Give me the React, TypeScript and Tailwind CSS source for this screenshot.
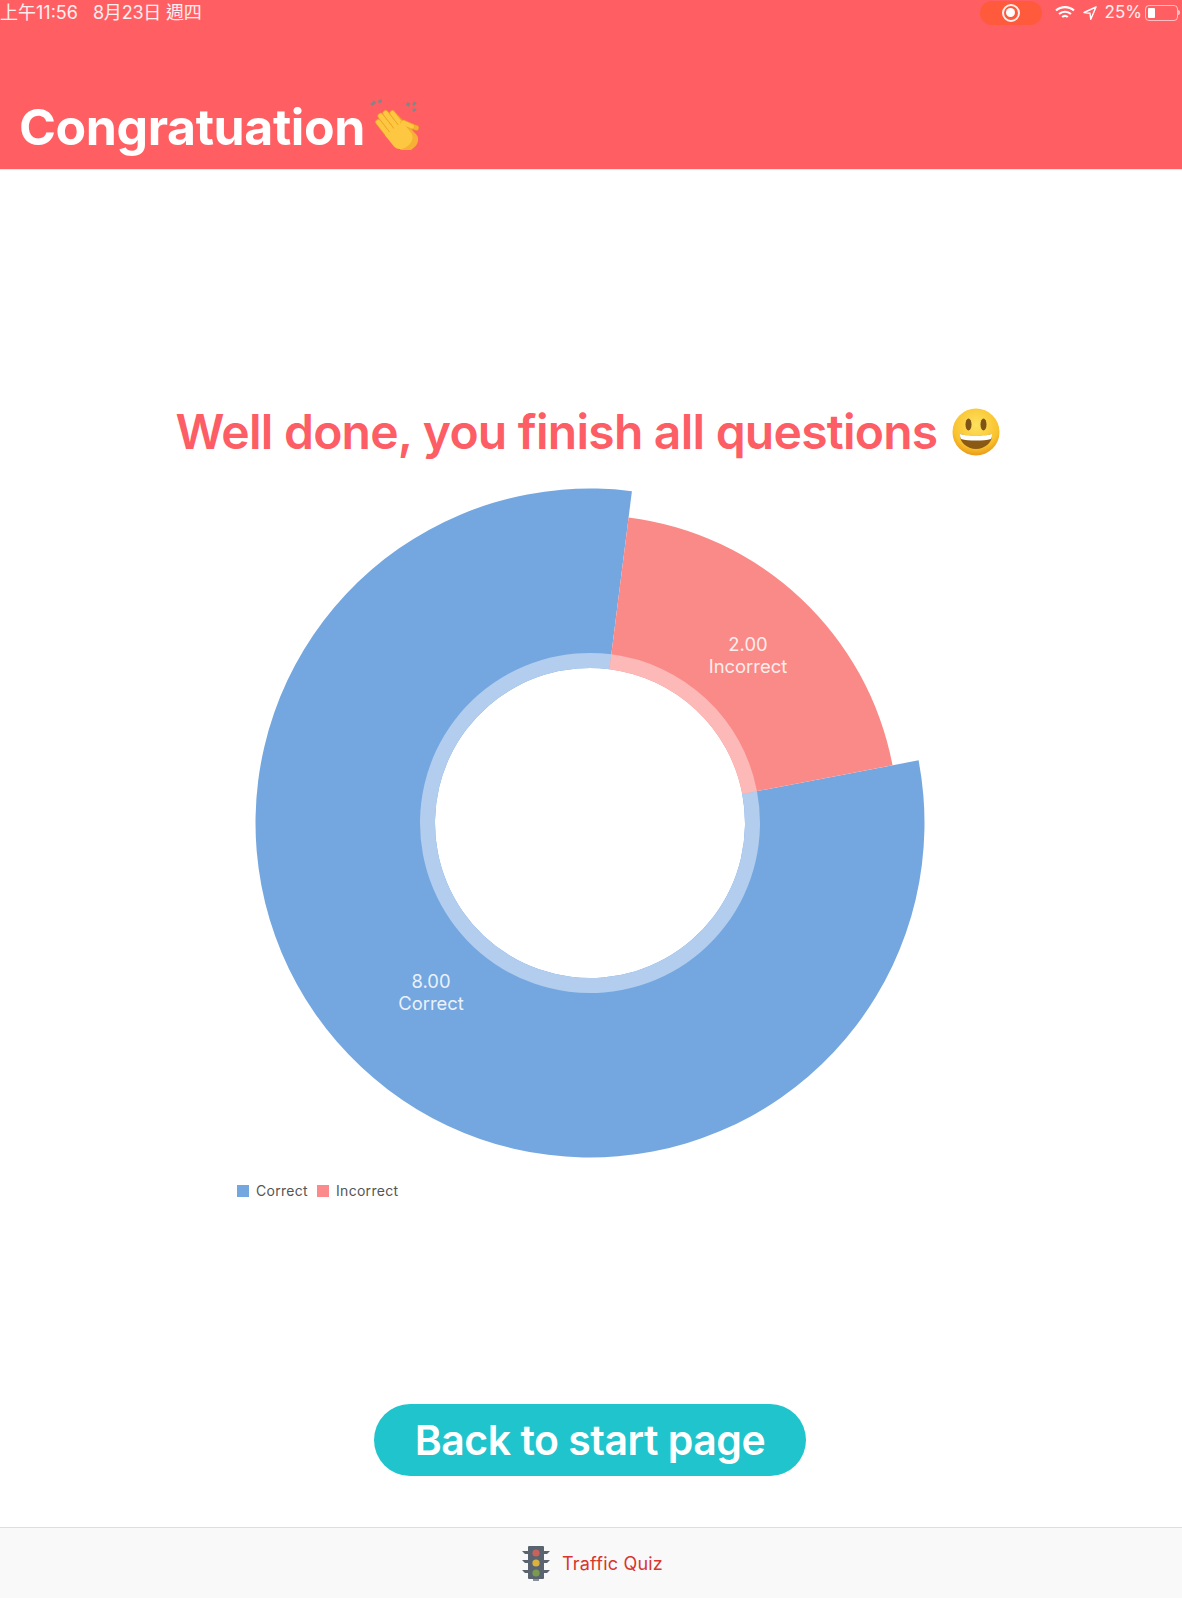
import React from "react";

const CX = 340;
const CY = 340;

const pt = (r: number, deg: number) => {
  const a = ((deg - 90) * Math.PI) / 180;
  return `${(CX + r * Math.cos(a)).toFixed(2)} ${(CY + r * Math.sin(a)).toFixed(2)}`;
};

const slice = (r0: number, r1: number, from: number, to: number) => {
  const large = to - from > 180 ? 1 : 0;
  return `M${pt(r1, from)} A${r1} ${r1} 0 ${large} 1 ${pt(r1, to)} L${pt(r0, to)} A${r0} ${r0} 0 ${large} 0 ${pt(r0, from)} Z`;
};

const Chart = () => (
  <svg width="680" height="680" viewBox="0 0 680 680" className="block">
    <path d={slice(155, 334.5, 79.2, 367.2)} fill="#74a7e0" />
    <path d={slice(155, 308, 7.2, 79.2)} fill="#fa8a87" />
    <path d={slice(155, 170, 79.2, 367.2)} fill="#b2cdee" />
    <path d={slice(155, 170, 7.2, 79.2)} fill="#fdb9b8" />
    <g fill="#ffffff" fontFamily="Inter, sans-serif" fontSize="18.4" textAnchor="middle" opacity="0.85">
      <text x="498" y="168">2.00</text>
      <text x="498" y="190">Incorrect</text>
      <text x="181" y="505">8.00</text>
      <text x="181" y="527">Correct</text>
    </g>
  </svg>
);

const Hand = ({ fill, edge }: { fill: string; edge: string }) => (
  <g fill={fill} stroke={edge} strokeWidth="0.7">
    <rect x="-13" y="-24" width="6.4" height="26" rx="3.2" />
    <rect x="-6.500" y="-28" width="6.4" height="30" rx="3.2" />
    <rect x="0" y="-27" width="6.4" height="29" rx="3.2" />
    <rect x="6.500" y="-22" width="6" height="24" rx="3" />
    <rect x="12" y="-6" width="6" height="17" rx="3" transform="rotate(-28 15 2)" />
    <path d="M-13 -4h25.500v16c0 6-5 10-12.500 10s-13-4-13-10z" stroke="none" />
  </g>
);

const Clap = () => (
  <svg width="50" height="52" viewBox="0 0 50 52" className="shrink-0">
    <g fill="#858585">
      <path d="M1 6l4.500-3.500 1.500 2.500-3.500 3z" />
      <path d="M9 2.500l3.500-1.500 .8 3-3.500 1.500z" />
      <path d="M38 4l3.500 1.200-1.500 3.500-3-1.700z" />
      <path d="M45 3.500l3 1.800-3.500 3-1.200-2.300z" />
      <path d="M45 10l3 1.800-3.500 2.400-1.200-1.800z" />
    </g>
    <g transform="translate(32 36) rotate(-44) scale(0.86)">
      <Hand fill="#f7b035" edge="#e2931d" />
    </g>
    <g transform="translate(27 33) rotate(-38) scale(0.86)">
      <Hand fill="#fdc741" edge="#e99f22" />
    </g>
  </svg>
);

const Smile = () => (
  <svg width="48" height="48" viewBox="0 0 48 48" className="shrink-0">
    <defs>
      <radialGradient id="face" cx="50%" cy="35%" r="65%">
        <stop offset="0%" stopColor="#fde15f" />
        <stop offset="75%" stopColor="#f9c22e" />
        <stop offset="100%" stopColor="#ea9a18" />
      </radialGradient>
    </defs>
    <circle cx="24" cy="24" r="23.5" fill="url(#face)" />
    <ellipse cx="16.5" cy="16.5" rx="3" ry="6" fill="#7d5316" />
    <ellipse cx="31.5" cy="16.5" rx="3" ry="6" fill="#7d5316" />
    <path d="M8 26c5 2 27 2 32 0 1 8-7 15-16 15S7 34 8 26z" fill="#8a5a14" />
    <path d="M8 26c5 2 27 2 32 0 0 2 0 3-1 5-7 2-23 2-30 0-1-2-1-3-1-5z" fill="#ffffff" />
  </svg>
);

const TrafficLight = () => (
  <svg width="28" height="36" viewBox="0 0 28 36">
    <g fill="#5a6470">
      <path d="M0 6h6v3H3zM28 6h-6v3h3zM0 15h6v3H3zM28 15h-6v3h3zM0 25h6v3H3zM28 25h-6v3h3z" />
      <rect x="6" y="1" width="16" height="33" rx="1" />
    </g>
    <rect x="11" y="34" width="6" height="2" fill="#8a9099" />
    <circle cx="14" cy="8" r="3.600" fill="#c9625a" />
    <circle cx="14" cy="18" r="3.600" fill="#dcb23e" />
    <circle cx="14" cy="28" r="3.600" fill="#7c9a4e" />
  </svg>
);

const Battery = () => (
  <div className="flex items-center">
    <div className="w-[33px] h-[16px] rounded-[4px] border border-white/60 p-[2px]">
      <div className="w-[7px] h-full rounded-[1px] bg-white" />
    </div>
    <div className="w-[2px] h-[5px] rounded-r-sm bg-white/60" />
  </div>
);

const StatusBar = () => (
  <div className="h-[25px] flex items-center justify-between pr-[2px] text-white/90 text-[18px] font-['Inter','Noto_Sans_CJK_TC',sans-serif]">
    <div className="flex gap-[15px] whitespace-nowrap">
      <span>上午11:56</span>
      <span className="tracking-[-0.2px]">8月23日 週四</span>
    </div>
    <div className="flex items-center text-[17px]">
      <div className="w-[62px] h-[24px] rounded-full bg-[#ff5a3c] flex items-center justify-center mr-[13px]">
        <div className="w-[18px] h-[18px] rounded-full border-2 border-white/90 flex items-center justify-center">
          <div className="w-[9px] h-[9px] rounded-full bg-white" />
        </div>
      </div>
      <svg width="20" height="15" viewBox="0 0 20 15" className="mr-[8px]" fill="none" stroke="#fff" strokeWidth="2.200">
        <path d="M1 5.500c5-4.500 13-4.500 18 0" />
        <path d="M4 9c3.400-3 8.600-3 12 0" />
        <path d="M7.200 12c1.600-1.400 4-1.400 5.600 0" />
      </svg>
      <svg width="14" height="14" viewBox="0 0 14 14" className="mr-[8px]" fill="none" stroke="#fff" strokeWidth="1.400">
        <path d="M13 1L1 6.500l6 .8.800 6z" strokeLinejoin="round" />
      </svg>
      <span className="mr-[3px]">25%</span>
      <Battery />
    </div>
  </div>
);

export default function App() {
  return (
    <div className="w-[1182px] h-[1598px] flex flex-col bg-white font-['Inter',sans-serif] overflow-hidden">
      <header className="h-[170px] bg-[#ff5f63] border-b border-[#f3e4e4] flex flex-col">
        <StatusBar />
        <div className="flex items-center pl-[19px] mt-[72px] h-[60px]">
          <h1 className="text-[50px] leading-none font-bold text-white tracking-[-0.4px]">Congratuation</h1>
          <div className="-mt-[6px] ml-[4px]">
            <Clap />
          </div>
        </div>
      </header>

      <main className="flex-1 flex flex-col items-center">
        <div className="flex items-center justify-center gap-[15px] mt-[238px] h-[48px] w-full pr-[6px]">
          <h2 className="text-[48px] leading-none font-semibold text-[#fd5d64] tracking-[-0.75px] whitespace-nowrap">
            Well done, you finish all questions
          </h2>
          <Smile />
        </div>
        <div className="mt-[27px] mr-[2px]">
          <Chart />
        </div>
        <div className="self-start flex items-center ml-[237px] mt-[17px] text-[14px] text-[#555555] tracking-[0.3px]">
          <div className="w-[12px] h-[12px] bg-[#74a7e0] mr-[7px]" />
          <span className="mr-[9px]">Correct</span>
          <div className="w-[12px] h-[12px] bg-[#fb8a8c] mr-[7px]" />
          <span>Incorrect</span>
        </div>
        <button className="mt-[203px] mr-[2px] w-[432px] h-[72px] pt-[2px] rounded-full bg-[#1fc4cc] text-white text-[41px] font-semibold tracking-[-0.5px]">
          Back to start page
        </button>
      </main>

      <footer className="h-[71px] pl-[3px] bg-[#f9f9f9] border-t border-[#dedede] flex items-center justify-center gap-[12px]">
        <TrafficLight />
        <span className="text-[18px] tracking-[0.2px] text-[#d8352e]">Traffic Quiz</span>
      </footer>
    </div>
  );
}
